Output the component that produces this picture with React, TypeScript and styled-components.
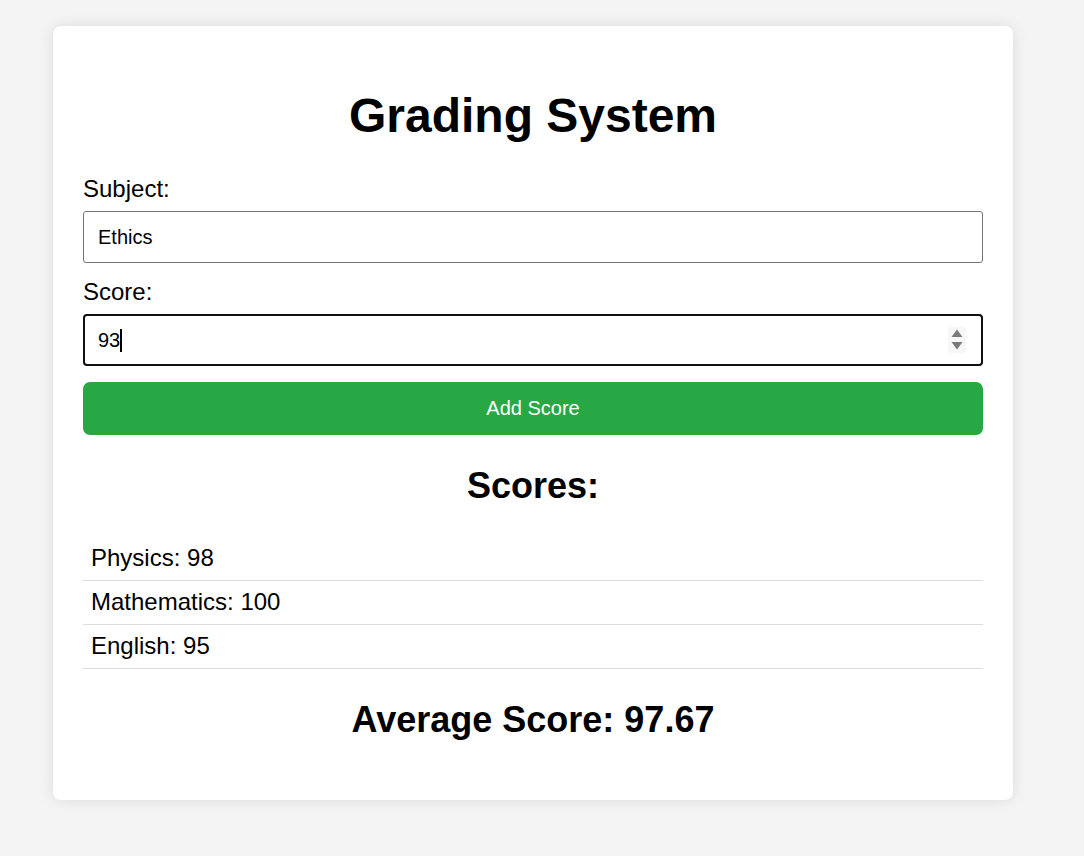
import React, { useState } from "react";
import styled, { createGlobalStyle } from "styled-components";

const GlobalStyle = createGlobalStyle`
  html, body {
    margin: 0;
    padding: 0;
    background: #f4f4f4;
    font-family: "Liberation Sans", Arial, sans-serif;
    color: #000;
  }
  * { box-sizing: border-box; }
`;

const Page = styled.div`
  padding: 26px 0 56px 53px;
`;

const Card = styled.main`
  width: 960px;
  padding: 30px;
  background: #ffffff;
  border-radius: 8px;
  box-shadow: 0 0 15px rgba(0, 0, 0, 0.1);
`;

const Title = styled.h1`
  margin: 32px 0;
  font-size: 48px;
  font-weight: 700;
  line-height: 55px;
  text-align: center;
`;

const Label = styled.label`
  display: block;
  margin-bottom: 8px;
  font-size: 24px;
  line-height: 28px;
`;

const FieldWrap = styled.div<{ $gap?: number }>`
  position: relative;
  margin-bottom: ${(p) => p.$gap ?? 15}px;
`;

const TextInput = styled.input<{ $focused?: boolean }>`
  display: block;
  width: 100%;
  height: 52px;
  margin: 0;
  padding: 0 ${(p) => (p.$focused ? "13px" : "14px")};
  border: ${(p) => (p.$focused ? "2px solid #101010" : "1px solid #767676")};
  border-radius: ${(p) => (p.$focused ? "4px" : "3px")};
  font-family: "Liberation Sans", Arial, sans-serif;
  font-size: 20px;
  color: #000;
  background: #fff;
  outline: none;
  -moz-appearance: textfield;

  &::-webkit-inner-spin-button,
  &::-webkit-outer-spin-button {
    -webkit-appearance: none;
    margin: 0;
  }
`;

const Caret = styled.span`
  position: absolute;
  left: 37px;
  top: 15px;
  width: 2px;
  height: 23px;
  background: #000;
  pointer-events: none;
`;

const Spinner = styled.span`
  position: absolute;
  right: 17px;
  top: 13px;
  width: 18px;
  height: 26px;
  display: flex;
  align-items: center;
  justify-content: center;
  background: #f7f7f7;
  pointer-events: none;
`;

const AddButton = styled.button`
  display: block;
  width: 100%;
  height: 53px;
  margin: 0;
  padding: 0;
  border: none;
  border-radius: 7px;
  background: #28a745;
  color: #ffffff;
  font-family: "Liberation Sans", Arial, sans-serif;
  font-size: 20px;
  cursor: pointer;
`;

const SectionTitle = styled.h2`
  margin: 30px 0;
  font-size: 36px;
  font-weight: 700;
  line-height: 41.5px;
  text-align: center;
`;

const ScoreList = styled.ul`
  list-style: none;
  margin: 0;
  padding: 0;
`;

const ScoreItem = styled.li`
  padding: 7.5px 8px;
  border-bottom: 1px solid #dddddd;
  font-size: 24px;
  line-height: 28px;
`;

type Entry = { subject: string; score: number };

export default function App() {
  const [subject, setSubject] = useState("Ethics");
  const [score, setScore] = useState("93");
  const [entries, setEntries] = useState<Entry[]>([
    { subject: "Physics", score: 98 },
    { subject: "Mathematics", score: 100 },
    { subject: "English", score: 95 },
  ]);

  const average =
    entries.length > 0
      ? entries.reduce((s, e) => s + e.score, 0) / entries.length
      : 0;

  const add = () => {
    const n = parseFloat(score);
    if (!subject.trim() || isNaN(n)) return;
    setEntries([...entries, { subject: subject.trim(), score: n }]);
    setSubject("");
    setScore("");
  };

  return (
    <>
      <GlobalStyle />
      <Page>
        <Card>
          <Title>Grading System</Title>
          <Label htmlFor="subject">Subject:</Label>
          <FieldWrap>
            <TextInput
              id="subject"
              type="text"
              value={subject}
              onChange={(e) => setSubject(e.target.value)}
            />
          </FieldWrap>
          <Label htmlFor="score">Score:</Label>
          <FieldWrap $gap={16}>
            <TextInput
              id="score"
              type="number"
              $focused
              value={score}
              onChange={(e) => setScore(e.target.value)}
            />
            <Caret />
            <Spinner>
              <svg width="12" height="22" viewBox="0 0 12 22" aria-hidden="true">
                <path d="M6 0.5 L11.5 8 L0.5 8 Z" fill="#7a7a7a" />
                <path d="M0.5 13 L11.5 13 L6 20.5 Z" fill="#7a7a7a" />
              </svg>
            </Spinner>
          </FieldWrap>
          <AddButton type="button" onClick={add}>
            Add Score
          </AddButton>
          <SectionTitle>Scores:</SectionTitle>
          <ScoreList>
            {entries.map((e, i) => (
              <ScoreItem key={i}>
                {e.subject}: {e.score}
              </ScoreItem>
            ))}
          </ScoreList>
          <SectionTitle>Average Score: {average.toFixed(2)}</SectionTitle>
        </Card>
      </Page>
    </>
  );
}
